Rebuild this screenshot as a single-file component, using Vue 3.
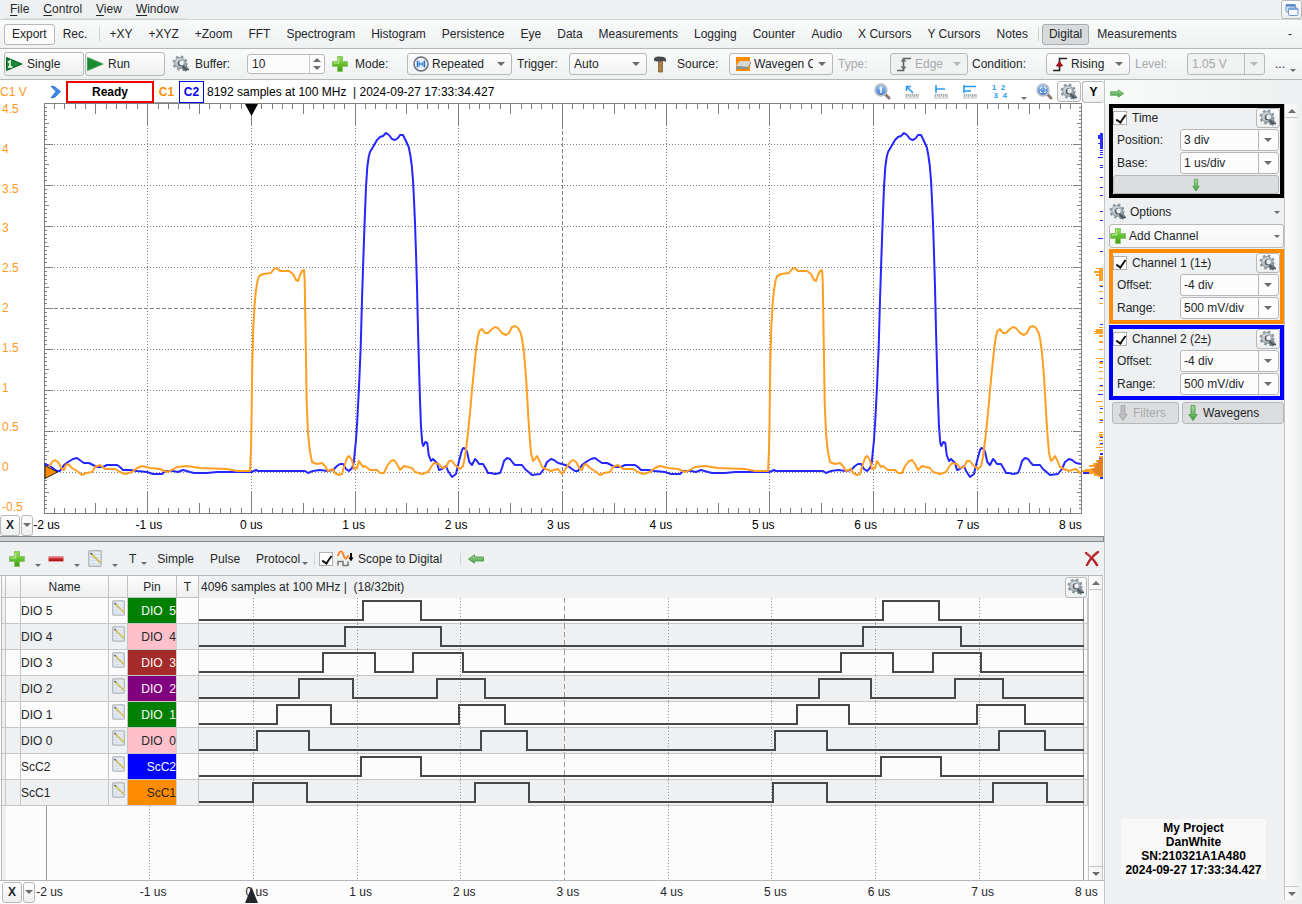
<script setup>
import { ref } from 'vue'

const views = ['+XY', '+XYZ', '+Zoom', 'FFT', 'Spectrogram', 'Histogram', 'Persistence', 'Eye', 'Data', 'Measurements', 'Logging', 'Counter', 'Audio', 'X Cursors', 'Y Cursors', 'Notes']
const volts = ['4.5', '4', '3.5', '3', '2.5', '2', '1.5', '1', '0.5', '0', '-0.5']
const times = ['-2 us', '-1 us', '0 us', '1 us', '2 us', '3 us', '4 us', '5 us', '6 us', '7 us', '8 us']

// Plot area: 10 x 10 divisions
const X0 = 44, Y0 = 103, DX = 103.7, DY = 41
const half = v => Math.floor(v) + 0.5
const vLines = Array.from({ length: 9 }, (_, i) => ({ x: half(X0 + DX * (i + 1)), mid: i === 4 }))
const hLines = Array.from({ length: 9 }, (_, i) => ({ y: half(Y0 + DY * (i + 1)), mid: i === 4 }))
let tickPath = ''
for (let i = 1; i < 100; i++) {
  const x = half(X0 + (DX * i) / 10)
  const y = half(Y0 + (DY * i) / 10)
  const lx = i % 10 === 0 ? 21 : i % 5 === 0 ? 10 : 5
  const ly = i % 10 === 0 ? 9 : i % 5 === 0 ? 5 : 3
  tickPath += `M${x} 104v${lx}M${x} 513v${-lx}M44 ${y}h${ly}M1082 ${y}h${-ly}`
}

// One 5 us period of each analog channel
const blue = [44,464,50,466,54,469,57,471,60,471,64,465,68,462,73,459,77,458,81,461,84,463,89,463,93,465,97,467,103,467,107,465,117,465,120,467,123,470,130,470,137,471,147,472,153,474,162,474,165,471,173,471,178,472,183,470,190,472,194,473,207,473,217,472,230,472,251,472,254,471,256,470,258,471,280,471,305,471,308,473,313,471,320,470,328,471,333,470,337,466,340,464,343,464,346,469,349,471,352,468,353.7,463,354.7,453,356,440,357.3,420,359,387,360.7,347,362,300,363.3,260,364.7,220,366,187,367.3,167,368.7,157,370,152,373,147,377,140,380,137,383,136,386,133,389,135,392,139,395,140,398,138,400,135,403,135,405,139,408.7,147,410.3,155,411.7,165,413,180,414,200,415,223,416,253,417,287,418,330,419,367,420,400,421,427,422.3,443,423.3,446,425.3,442,427.3,443,428.7,455,431,461,433,459,437,463,439,470,442,469,446,466,448,471,452,477,456,474,457.3,468,459.3,460,462,450,463.3,448,466,449,467.3,453,469.3,462,472,465,475,459,477,461,479,464,483,464,486,469,488,473,491,473,495,474,500,473,502,468,504,461,507,458,510,459,513,463,515,465,522,465,525,469,532,475,540,474,544,469,547,462,551,459,554,460,558,463]
const orange = [44,474,49,467,52,462,55,460,58,462,62,469,64,470,66,465,68,464,72,468,77,471,82,475,86,473,92,472,95,467,100,465,105,469,115,469,120,472,125,474,132,472,137,468,142,466,150,468,160,469,167,472,172,470,177,467,187,466,200,468,227,469,237,471,250,471,251,450,251.5,423,252.3,363,253.3,327,254.7,303,256,290,257.7,280,259.3,276,263,274,271,273,274,269,277,268,280,271,289,271,293,274,296,280,298,281,300,275,302,271,304,270,304.7,280,305.7,340,306.7,403,308,433,309.7,450,312,462,317,464,322,463,325,466,328,471,333,469,335,473,339,475,342,474,344,467,347,458,349,456,352,460,354,469,357,468,359,461,363,467,365,466,370,470,377,470,380,473,384,473,387,466,391,461,394,460,397,464,400,470,404,466,412,468,415,472,422,474,428,472,431,467,434,463,439,464,442,468,446,467,449,461,452,461,455,465,460,469,463,466,465,457,466.3,447,468.3,430,470,413,472,390,474,370,476,350,477.7,338,479.3,331,482,329,485,333,488,333,492,329,495,327,498,328,502,333,506,335,509,333,512,327,515,326,518,328,520.7,333,522.3,340,524,353,525.7,373,527,393,528.3,417,529.7,437,531,453,533,461,535,459,537,456,540,462,542,467,546,469,551,471,554,470,558,469]
const trace = (p) => {
  const pts = []
  for (const shift of [0, 518]) {
    for (let i = 0; i < p.length; i += 2) pts.push(`${p[i] + shift},${p[i + 1]}`)
  }
  pts.push(`1081,${p[1]}`)
  return pts.join(' ')
}

// Level histogram bars: y, height, length
const blueBars = [[133,16,3],[135,4,5],[143,1,5],[150,1,3],[152,1,3],[154,1,3],[157,1,5],[165,1,3],[167,1,3],[177,1,3],[187,1,3],[195,1,3],[211,1,3],[220,1,3],[238,1,5],[251,1,3],[286,1,3],[298,1,3],[324,1,3],[361,1,3],[385,1,3],[394,1,5],[408,1,3],[420,1,3],[437,1,3],[443,1,3],[453,2,3],[456,3,4],[472,2,20],[477,2,3]]
const orangeBars = [[268,13,4],[268,1,7],[271,2,9],[274,2,7],[285,1,4],[291,1,4],[303,1,4],[327,1,4],[329,5,7],[331,1,9],[333,1,9],[335,2,4],[341,2,4],[349,1,4],[358,1,7],[362,2,4],[367,1,4],[371,1,4],[378,1,4],[386,1,4],[390,1,4],[401,1,7],[406,1,4],[412,1,4],[419,1,4],[422,1,4],[432,1,4],[434,3,4],[440,1,4],[444,1,4],[447,1,7],[450,1,4],[456,2,4],[460,2,7],[463,2,10],[465,2,14],[468,1,12],[469,1,18],[470,2,21],[472,2,14],[474,2,9],[476,1,5]]

const signals = [
  { name: 'DIO 5', pin: 'DIO  5', tone: 'green', edges: [363, 421, 883, 939] },
  { name: 'DIO 4', pin: 'DIO  4', tone: 'pink', edges: [345, 441, 863, 961] },
  { name: 'DIO 3', pin: 'DIO  3', tone: 'brown', edges: [323, 375, 413, 463, 841, 893, 933, 981] },
  { name: 'DIO 2', pin: 'DIO  2', tone: 'purple', edges: [299, 353, 437, 485, 819, 871, 955, 1003] },
  { name: 'DIO 1', pin: 'DIO  1', tone: 'green', edges: [277, 331, 459, 505, 797, 849, 977, 1025] },
  { name: 'DIO 0', pin: 'DIO  0', tone: 'pink', edges: [257, 309, 481, 527, 775, 827, 999, 1045] },
  { name: 'ScC2', pin: 'ScC2', tone: 'blue', edges: [361, 421, 881, 941] },
  { name: 'ScC1', pin: 'ScC1', tone: 'orange', edges: [253, 307, 475, 529, 773, 827, 993, 1047] }
]
const wave = (edges) => edges.reduce((d, x, i) => d + `H${x}V${i % 2 ? 22 : 3}`, 'M199 22') + 'H1084'
const digitalLines = [149.5, 253.5, 357.5, 460.5, 668.5, 771.5, 875.5, 979.5]

const channels = [
  { id: 'ch1', title: 'Channel 1 (1±)', tone: 'edge-orange' },
  { id: 'ch2', title: 'Channel 2 (2±)', tone: 'edge-blue' }
]
const timeOn = ref(true)
const scopeToDigital = ref(true)
</script>

<template>
  <div class="app">
    <svg class="defs" aria-hidden="true">
      <defs>
        <linearGradient id="gGreen" x1="0" y1="0" x2="0" y2="1"><stop offset="0" stop-color="#8fe04e" /><stop offset="1" stop-color="#3f9e12" /></linearGradient>
        <linearGradient id="gArrow" x1="0" y1="0" x2="0" y2="1"><stop offset="0" stop-color="#a5e09a" /><stop offset="1" stop-color="#3f9a3c" /></linearGradient>
        <linearGradient id="gRed" x1="0" y1="0" x2="0" y2="1"><stop offset="0" stop-color="#f0a0a4" /><stop offset=".5" stop-color="#cc1e28" /><stop offset="1" stop-color="#9c1018" /></linearGradient>
        <linearGradient id="gSteel" x1="0" y1="0" x2="1" y2="1"><stop offset="0" stop-color="#e3e7ea" /><stop offset="1" stop-color="#8d989f" /></linearGradient>
        <linearGradient id="gLens" x1="0" y1="0" x2="0" y2="1"><stop offset="0" stop-color="#a8c8f4" /><stop offset="1" stop-color="#3b78d0" /></linearGradient>
      </defs>
      <symbol id="gear" viewBox="0 0 18 18">
        <circle cx="8" cy="8" r="6.4" fill="none" stroke="#8b979e" stroke-width="2.2" stroke-dasharray="2.6 2.43" />
        <circle cx="8" cy="8" r="5.4" fill="url(#gSteel)" stroke="#87939a" stroke-width=".9" />
        <circle cx="8.800" cy="8.200" r="3" fill="#4d5a62" />
        <circle cx="9.600" cy="8" r="2.400" fill="#eef0f1" />
        <circle cx="13" cy="13.300" r="2.600" fill="#6f7b82" stroke="#7d8990" stroke-width="1.400" stroke-dasharray="1.500 1" />
        <path d="M10.500 11l3 3.400h3.500" stroke="#47535a" stroke-width="1.500" fill="none" />
      </symbol>
      <symbol id="plus" viewBox="0 0 16 16"><path d="M5.500 .5h5v5h5v5h-5v5h-5v-5h-5v-5h5z" fill="url(#gGreen)" stroke="#8cc470" stroke-linejoin="round" /><path d="M6.800 2v5H2" stroke="#c3f29a" fill="none" /></symbol>
      <symbol id="minus" viewBox="0 0 16 16"><rect x=".5" y="5.500" width="15" height="5" rx="1" fill="url(#gRed)" stroke="#d79598" /></symbol>
      <symbol id="note" viewBox="0 0 14 17"><rect x=".8" y=".8" width="12.400" height="15.400" rx="1" fill="#e9eef5" stroke="#b3b5b8" stroke-width="1.400" /><path d="M2 4.500h10M2 7.500h10M2 10.500h10M2 13.500h10M5 2v13" stroke="#ccd8ea" stroke-width=".8" /><path d="M3.500 4l9 9" stroke="#d4bd58" stroke-width="1.800" /><path d="M2.500 3l1.500 1.500" stroke="#555" stroke-width="1.400" /></symbol>
      <symbol id="caret" viewBox="0 0 8 4"><path d="M0 0h8L4 4z" fill="currentColor" /></symbol>
      <symbol id="arrow" viewBox="0 0 16 10"><path d="M.5 3h9V.8L15.500 5 9.500 9.200V7h-9z" fill="url(#gArrow)" stroke="#4f9a4c" stroke-width=".9" stroke-linejoin="round" /></symbol>
      <symbol id="down" viewBox="0 0 10 16"><path d="M3 .5v9H.8L5 15.500 9.200 9.500H7v-9z" fill="url(#gArrow)" stroke="#4f9a4c" stroke-width=".9" stroke-linejoin="round" /></symbol>
      <symbol id="downOff" viewBox="0 0 10 16"><path d="M3 .5v9H.8L5 15.500 9.200 9.500H7v-9z" fill="#bfc0c1" stroke="#a5a6a7" stroke-width=".9" stroke-linejoin="round" /></symbol>
      <symbol id="lens" viewBox="0 0 17 17"><path d="M10.500 10.500l4.500 4.500" stroke="#8a7a72" stroke-width="3" stroke-linecap="round" /><circle cx="7" cy="7" r="5.800" fill="url(#gLens)" stroke="#b9bec4" stroke-width="1.800" /></symbol>
      <symbol id="ruler" viewBox="0 0 14 5"><rect width="14" height="5" fill="#dddfe0" /><path d="M1.500 0v3M3.500 0v2M5.500 0v3M7.500 0v2M9.500 0v3M11.500 0v2M13 0v3" stroke="#a0a3a6" stroke-width=".8" /></symbol>
    </svg>

    <nav class="menubar">
      <button class="menu"><u>F</u>ile</button>
      <button class="menu"><u>C</u>ontrol</button>
      <button class="menu"><u>V</u>iew</button>
      <button class="menu"><u>W</u>indow</button>
      <button class="btn restore" aria-label="Restore window">
        <svg width="14" height="14" viewBox="0 0 14 14"><rect x="1" y="1.500" width="9.500" height="7.500" rx="1" fill="#dbe6f6" stroke="#6f97ce" /><path d="M1 2.500h9.500" stroke="#5685c6" stroke-width="2" /><rect x="3.500" y="5" width="9.500" height="7.500" rx="1" fill="#f4f8fe" stroke="#6f97ce" /><path d="M3.500 6h9.500" stroke="#7fa6dc" stroke-width="2" /></svg>
      </button>
    </nav>

    <div class="bar views">
      <button class="flat raised">Export</button>
      <button class="flat">Rec.</button>
      <i class="sep rec-sep"></i>
      <button v-for="v in views" :key="v" class="flat">{{ v }}</button>
      <i class="sep"></i>
      <button class="flat pressed">Digital</button>
      <button class="flat">Measurements</button>
      <span class="overflow">-</span>
    </div>

    <div class="bar acquire">
      <button class="btn run"><svg width="17" height="16" viewBox="0 0 17 16"><path d="M.5 1.500L16 8 .5 14.500z" fill="#1b8a35" stroke="#11571d" /><path d="M2 6.500l2-1.500V11M2 11h4.500" stroke="#fff" stroke-width="1.500" fill="none" /></svg>Single</button>
      <button class="btn run"><svg width="17" height="16" viewBox="0 0 17 16"><path d="M.5 1.500L16 8 .5 14.500z" fill="#1b8a35" stroke="#3f9a50" /></svg>Run</button>
      <button class="icon gear-tool" aria-label="Acquisition options"><svg width="18" height="18"><use href="#gear" /></svg></button>
      <label class="lab" for="buffer">Buffer:</label>
      <span class="spin"><input id="buffer" type="text" value="10"><span class="steps"><svg class="up" width="8" height="4"><use href="#caret" /></svg><svg width="8" height="4"><use href="#caret" /></svg></span></span>
      <button class="icon plus-tool" aria-label="Add buffer"><svg width="16" height="16"><use href="#plus" /></svg></button>
      <label class="lab" for="mode">Mode:</label>
      <span class="combo w105"><svg class="ic" width="16" height="16" viewBox="0 0 16 16"><circle cx="8" cy="8" r="7" fill="#eef3fa" stroke="#69717c" stroke-width="1.500" /><path d="M4.500 4.500v7M11.500 4.500v7" stroke="#2f74c8" stroke-width="1.500" /><path d="M5.500 5l3 3-3 3zM10.500 5L7.500 8l3 3z" fill="#4d8cd8" /></svg><select id="mode" class="with-icon"><option>Repeated</option></select><svg class="car" width="8" height="4"><use href="#caret" /></svg></span>
      <label class="lab pad" for="trigger">Trigger:</label>
      <span class="combo w78"><select id="trigger"><option>Auto</option></select><svg class="car" width="8" height="4"><use href="#caret" /></svg></span>
      <button class="icon hammer-tool" aria-label="Trigger settings"><svg width="14" height="18" viewBox="0 0 14 18"><path d="M5.500 6h4v11h-4z" fill="#a98147" stroke="#7c5a2c" stroke-width=".8" /><path d="M1 3.500Q3 1 6 1.500l5 .5 2 2v3l-2-1-8 .5-2-1z" fill="#454a4e" /></svg></button>
      <label class="lab" for="source">Source:</label>
      <span class="combo w104"><svg class="ic" width="16" height="16" viewBox="0 0 16 16"><path fill="#ff8c00" d="M1 1h14v14H1z" /><path d="M1 10l4-5h11l-3 6z" fill="#d5d7d9" /><path d="M1 10l12 1v2H1zM13 11l3-6v2l-3 6z" fill="#8e9194" /></svg><select id="source" class="with-icon"><option>Wavegen C1</option></select><svg class="car" width="8" height="4"><use href="#caret" /></svg></span>
      <label class="lab pad off" for="type">Type:</label>
      <span class="combo w78 off"><svg class="ic" width="18" height="16" viewBox="0 0 18 16"><path d="M1 14.500h6.500v-12H15" stroke="#606366" stroke-width="1.600" fill="none" /><path d="M4.500 5.500h6l-3-3.500zM4.500 10.500h6l-3 3.500z" fill="#6a6d70" /></svg><select id="type" class="with-icon" disabled><option>Edge</option></select><svg class="car" width="8" height="4"><use href="#caret" /></svg></span>
      <label class="lab pad wide" for="condition">Condition:</label>
      <span class="combo w84"><svg class="ic" width="18" height="16" viewBox="0 0 18 16"><path d="M1 14.500h6.500v-12H15" stroke="#222" stroke-width="1.600" fill="none" /><path d="M4.500 10h6l-3-4.500z" fill="#c00d1e" stroke="#8a0812" /></svg><select id="condition" class="with-icon"><option>Rising</option></select><svg class="car" width="8" height="4"><use href="#caret" /></svg></span>
      <label class="lab pad off" for="level">Level:</label>
      <span class="combo split w78 off"><select id="level" disabled><option>1.05 V</option></select><svg class="car" width="8" height="4"><use href="#caret" /></svg></span>
      <span class="more">...<svg width="6" height="3"><use href="#caret" /></svg></span>
    </div>

    <main class="body">
      <section class="left">
        <header class="status">
          <span class="unit">C1 V</span>
          <svg class="chev" width="11" height="14" viewBox="0 0 11 14"><path d="M1 1l5 5.500L1 13l4-1 5.500-5.500L5 2z" fill="#3d8bf2" stroke="#2a72d8" /></svg>
          <span class="ready">Ready</span>
          <span class="chip c1">C1</span>
          <span class="chip c2">C2</span>
          <span class="info">8192 samples at 100 MHz&nbsp; | 2024-09-27 17:33:34.427</span>
          <div class="tools">
            <button class="icon" aria-label="Zoom 1:1"><svg width="17" height="17" viewBox="0 0 17 17"><use href="#lens" /><path d="M5.500 5.500l1.500-1V10" stroke="#fff" stroke-width="1.500" fill="none" /></svg></button>
            <button class="icon" aria-label="Cursor"><svg width="15" height="14" viewBox="0 0 15 14"><path d="M2.500 6V1.500H7M3 2l6 6" stroke="#2b9cf4" stroke-width="1.600" fill="none" /><use href="#ruler" x="1" y="9" width="14" height="5" /></svg></button>
            <button class="icon" aria-label="Horizontal cursors"><svg width="15" height="14" viewBox="0 0 15 14"><path d="M3 0v8M3 4h9" stroke="#2b9cf4" stroke-width="1.600" fill="none" /><use href="#ruler" x="1" y="9" width="14" height="5" /></svg></button>
            <button class="icon" aria-label="Vertical cursors"><svg width="15" height="14" viewBox="0 0 15 14"><path d="M2 0v8M2 1.500h12M2 6h7" stroke="#2b9cf4" stroke-width="1.600" fill="none" /><use href="#ruler" x="1" y="9" width="14" height="5" /></svg></button>
            <button class="icon nums"><span>1</span><span>2</span><span class="in">3</span><span class="in">4</span></button>
            <svg class="drop" width="6" height="3"><use href="#caret" /></svg>
            <button class="icon fit" aria-label="Zoom fit"><svg width="17" height="17" viewBox="0 0 17 17"><use href="#lens" /><path d="M4.500 6V4.500H6M8 4.500h1.500V6M9.500 8v1.500H8M6 9.500H4.500V8" stroke="#e8f2ff" fill="none" /></svg></button>
            <button class="btn tool-gear" aria-label="Plot options"><svg width="18" height="18"><use href="#gear" /></svg></button>
            <button class="btn ybtn">Y</button>
          </div>
        </header>

        <div class="scope">
          <div class="volts"><span v-for="v in volts" :key="v">{{ v }}</span></div>
          <svg class="plot" viewBox="44 103 1038 411" preserveAspectRatio="none" role="img" aria-label="Oscilloscope traces">
            <g stroke="#808080" fill="none">
              <path v-for="l in vLines" :key="l.x" :d="`M${l.x} 125V492`" :stroke-dasharray="l.mid ? '4 2' : '1 2'" />
              <path v-for="l in hLines" :key="l.y" :d="`M54 ${l.y}H1073`" :stroke-dasharray="l.mid ? '4 2' : '1 2'" />
              <path :d="tickPath" />
              <rect x="44.500" y="103.500" width="1037" height="410" />
            </g>
            <path d="M245 104h13l-6.500 12z" fill="#000" />
            <polyline :points="trace(blue)" class="trace blue" />
            <polyline :points="trace(orange)" class="trace orange" />
            <path d="M45 465.500L57.500 472 45 478.500z" fill="#ff8c00" stroke="#222" />
          </svg>
          <svg class="levels" viewBox="1082 103 22 411" preserveAspectRatio="none" aria-hidden="true">
            <rect v-for="(b, i) in blueBars" :key="'b' + i" :x="1103 - b[2]" :y="b[0]" :height="b[1]" :width="b[2]" fill="#2a2aff" />
            <rect v-for="(b, i) in orangeBars" :key="'o' + i" :x="1103 - b[2]" :y="b[0]" :height="b[1]" :width="b[2]" fill="#ffa126" />
            <path d="M1103 456l-5 5-2 5-4 4 4 4 7 3z" fill="#e08128" />
          </svg>
        </div>
        <div class="axis scope-axis">
          <button class="btn x">X</button><button class="btn xd" aria-label="X axis options"><svg width="8" height="4"><use href="#caret" /></svg></button>
          <div class="times"><span v-for="t in times" :key="t">{{ t }}</span></div>
        </div>

        <div class="splitter"></div>

        <div class="dtools">
          <button class="icon" aria-label="Add"><svg width="16" height="16"><use href="#plus" /></svg></button><svg class="drop" width="6" height="3"><use href="#caret" /></svg>
          <button class="icon" aria-label="Remove"><svg width="16" height="16"><use href="#minus" /></svg></button><svg class="drop" width="6" height="3"><use href="#caret" /></svg>
          <button class="icon notebtn" aria-label="Edit"><svg width="14" height="17"><use href="#note" /></svg></button><svg class="drop after-note" width="6" height="3"><use href="#caret" /></svg>
          <button class="flat t">T</button><svg class="drop near" width="6" height="3"><use href="#caret" /></svg>
          <button class="flat simple">Simple</button>
          <button class="flat">Pulse</button>
          <button class="flat proto">Protocol</button><svg class="drop near" width="6" height="3"><use href="#caret" /></svg>
          <i class="sep"></i>
          <label class="check"><input v-model="scopeToDigital" type="checkbox"><svg width="17" height="17" viewBox="0 0 17 17"><path d="M1 6c1.500-6 4-6 5.500-1s3 5 5 0" stroke="#ff8020" stroke-width="1.800" fill="none" /><path d="M1 15.500v-4h5v4h5v-4" stroke="#777" stroke-width="1.500" fill="none" /><path d="M14 3v5" stroke="#000" stroke-width="2" /><path d="M11.500 7.500h5l-2.500 4z" /></svg>Scope to Digital</label>
          <i class="sep second"></i>
          <button class="icon back" aria-label="Dock left"><svg width="16" height="10" viewBox="0 0 16 10"><use href="#arrow" transform="translate(16 0) scale(-1 1)" width="16" height="10" /></svg></button>
          <button class="icon close" aria-label="Close"><svg width="16" height="17" viewBox="0 0 16 17"><path d="M2 3q6 4 11 12M14 2Q7 7 3 15" stroke="#b3262b" stroke-width="2.400" fill="none" stroke-linecap="round" /><path d="M3 3q3 2 5 4" stroke="#ee8a88" fill="none" /></svg></button>
        </div>

        <div class="logic">
          <div class="logic-main">
            <table>
              <colgroup><col class="k0"><col class="k1"><col class="k2"><col class="k3"><col class="k4"><col class="k5"><col></colgroup>
              <thead>
                <tr><th></th><th></th><th>Name</th><th></th><th>Pin</th><th>T</th>
                  <th class="wave-head"><div>4096 samples at 100 MHz |&nbsp; (18/32bit)<button class="btn dgear" aria-label="Digital options"><svg width="18" height="18"><use href="#gear" /></svg></button></div></th></tr>
              </thead>
              <tbody>
                <tr v-for="s in signals" :key="s.name">
                  <td class="grip"></td><td></td><td>{{ s.name }}</td>
                  <td class="note"><button class="icon" :aria-label="'Edit ' + s.name"><svg width="13" height="16"><use href="#note" /></svg></button></td>
                  <td class="pin" :class="s.tone">{{ s.pin }}</td><td></td>
                  <td class="wave">
                    <svg viewBox="199 0 888 25" preserveAspectRatio="none" aria-hidden="true">
                      <g stroke="#9a9a9a"><path v-for="x in digitalLines.slice(1)" :key="x" :d="`M${x} 0V25`" stroke-dasharray="1 2" /><path d="M564.500 0V25" stroke-dasharray="5 3" /><path d="M1083.500 0V25" /></g>
                      <path :d="wave(s.edges)" fill="none" stroke="#464849" stroke-width="2" />
                    </svg>
                  </td>
                </tr>
              </tbody>
            </table>
            <svg class="rest" viewBox="2 0 1086 74" preserveAspectRatio="none" aria-hidden="true">
              <path d="M2 0h4v74H2z" fill="#eff0f1" />
              <g stroke="#9a9a9a"><path v-for="x in digitalLines" :key="x" :d="`M${x} 0V74`" stroke-dasharray="1 2" /><path d="M564.500 0V74" stroke-dasharray="5 3" /><path d="M46.500 0V74M1083.500 0V74" /></g>
            </svg>
          </div>
          <div class="scroll"><button class="sb" aria-label="Scroll up"><svg class="up" width="8" height="4"><use href="#caret" /></svg></button><i></i><button class="sb bottom" aria-label="Scroll down"><svg width="8" height="4"><use href="#caret" /></svg></button></div>
        </div>
        <div class="axis digital-axis">
          <button class="btn x">X</button><button class="btn xd" aria-label="X axis options"><svg width="8" height="4"><use href="#caret" /></svg></button>
          <div class="times"><span v-for="t in times" :key="t">{{ t }}</span><svg class="zero" width="13" height="16" viewBox="0 0 13 16"><path d="M0 16L6.500 0 13 16z" fill="#232629" /></svg></div>
        </div>
      </section>

      <aside class="side">
        <div class="side-top"><button class="icon" aria-label="Collapse panel"><svg width="14" height="9" viewBox="0 0 16 10"><use href="#arrow" width="16" height="10" /></svg></button></div>
        <div class="side-row">
          <div class="panel">
            <fieldset class="group edge-black">
              <div class="ghead"><label class="check"><input v-model="timeOn" type="checkbox">Time</label><button class="btn ggear" aria-label="Time options"><svg width="18" height="18"><use href="#gear" /></svg></button></div>
              <div class="grow"><label for="position">Position:</label><span class="combo split"><select id="position"><option>3 div</option></select><svg class="car" width="8" height="4"><use href="#caret" /></svg></span></div>
              <div class="grow"><label for="base">Base:</label><span class="combo split"><select id="base"><option>1 us/div</option></select><svg class="car" width="8" height="4"><use href="#caret" /></svg></span></div>
              <button class="btn gray expand" aria-label="Expand"><svg width="8" height="14" viewBox="0 0 10 16"><use href="#down" /></svg></button>
            </fieldset>
            <button class="opt"><svg width="18" height="18"><use href="#gear" /></svg>Options<svg class="end" width="6" height="3"><use href="#caret" /></svg></button>
            <button class="opt add"><svg width="16" height="16"><use href="#plus" /></svg>Add Channel<svg class="end" width="6" height="3"><use href="#caret" /></svg></button>
            <fieldset v-for="c in channels" :key="c.id" class="group" :class="c.tone">
              <div class="ghead"><label class="check"><input type="checkbox" checked>{{ c.title }}</label><button class="btn ggear" :aria-label="c.title + ' options'"><svg width="18" height="18"><use href="#gear" /></svg></button></div>
              <div class="grow"><label :for="c.id + 'o'">Offset:</label><span class="combo split"><select :id="c.id + 'o'"><option>-4 div</option></select><svg class="car" width="8" height="4"><use href="#caret" /></svg></span></div>
              <div class="grow"><label :for="c.id + 'r'">Range:</label><span class="combo split"><select :id="c.id + 'r'"><option>500 mV/div</option></select><svg class="car" width="8" height="4"><use href="#caret" /></svg></span></div>
            </fieldset>
            <div class="pair"><button class="btn gray filters" disabled><svg width="10" height="16"><use href="#downOff" /></svg>Filters</button><button class="btn gray wavegens"><svg width="10" height="16"><use href="#down" /></svg>Wavegens</button></div>
            <div class="stamp">My Project<br>DanWhite<br>SN:210321A1A480<br>2024-09-27 17:33:34.427</div>
          </div>
          <div class="scroll tall"><button class="sb" aria-label="Scroll up"><svg class="up" width="8" height="4"><use href="#caret" /></svg></button><i></i><button class="sb bottom" aria-label="Scroll down"><svg width="8" height="4"><use href="#caret" /></svg></button></div>
        </div>
      </aside>
    </main>
  </div>
</template>

<style>
body { margin: 0; background: #eff0f1; }
</style>

<style scoped>
.app { min-height: 100vh; display: flex; flex-direction: column; background: #eff0f1; color: #232629; font: 12px/16px "Liberation Sans", Arial, sans-serif; }
.app * { box-sizing: border-box; }
.defs { position: absolute; width: 0; height: 0; }
svg { flex: none; color: #6a6d70; }
button, input, select { font: inherit; color: inherit; margin: 0; }
button { padding: 0; border: 0; background: none; white-space: nowrap; }
.up { transform: rotate(180deg); }
.icon { display: flex; align-items: center; justify-content: center; }
.btn { display: flex; align-items: center; justify-content: center; border: 1px solid #b6b8ba; border-radius: 3px; background: linear-gradient(#fdfdfd, #eeefef); }
.gray { background: #dcddde; }

.menubar { height: 20px; display: flex; align-items: center; border-bottom: 1px solid #d3d4d6; padding-left: 3px; }
.menu { height: 18px; padding: 0 7px; line-height: 16px; border-bottom: 1px solid #dcddde; }
.menu u { text-underline-offset: 2px; }
.restore { width: 21px; height: 19px; margin-left: auto; }

.bar { display: flex; align-items: center; border-bottom: 1px solid #b5b7b9; background: linear-gradient(#f9fafa, #eff0f1); white-space: nowrap; }
.views { height: 29px; padding: 0 10px 0 4px; }
.flat { height: 21px; padding: 0 7px; border: 1px solid transparent; border-radius: 3px; }
.raised { border-color: #b6b8ba; background: #fcfcfc; }
.pressed { border-color: #a9abad; background: #d9dadb; padding: 0 6px; }
.sep { width: 1px; height: 14px; background: #d0d2d4; margin: 0 3px 0 2px; }
.rec-sep { margin: 0 1px 0 4px; }
.overflow { margin-left: auto; }

.acquire { height: 31px; padding: 0 6px 0 4px; }
.run { width: 80px; height: 24px; justify-content: flex-start; padding-left: 1px; gap: 4px; margin-right: 1px; }
.gear-tool { width: 29px; }
.plus-tool { width: 30px; }
.hammer-tool { width: 30px; padding-right: 4px; }
.lab { width: 52px; }
.pad { width: 57px; padding-left: 5px; }
.wide { width: 78px; padding-left: 4px; }
.off { color: #a7a9ab; }
.off svg.car { color: #b5b7b9; }
.spin { width: 78px; height: 20px; display: flex; border: 1px solid #b6b8ba; border-radius: 3px; background: #fcfcfc; }
.spin input { flex: 1; min-width: 0; border: 0; padding: 0 4px; background: none; outline: 0; }
.steps { width: 15px; border-left: 1px solid #c5c7c9; display: flex; flex-direction: column; justify-content: space-evenly; align-items: center; }
.combo { position: relative; display: block; height: 22px; border: 1px solid #b6b8ba; border-radius: 3px; background: linear-gradient(#fdfdfd, #f1f2f2); }
.combo select { appearance: none; display: block; width: 100%; height: 20px; border: 0; background: none; outline: 0; padding: 0 19px 0 4px; opacity: 1; }
.combo select.with-icon { padding-left: 24px; }
.combo .ic { position: absolute; left: 5px; top: 2px; }
.combo .car { position: absolute; right: 6px; top: 8px; }
.combo.off { background: #f0f1f1; }
.combo.split { background: #fcfcfc; }
.combo.split.off { background: #f0f1f1; }
.combo.split::after { content: ""; position: absolute; right: 19px; top: 0; bottom: 0; border-left: 1px solid #b6b8ba; }
.w105 { width: 105px; }
.w104 { width: 104px; }
.w78 { width: 78px; }
.w84 { width: 84px; }
.more { margin-left: auto; display: flex; align-items: flex-end; gap: 5px; }

.body { flex: 1; display: grid; grid-template-columns: minmax(0, 1fr) 197px; }
.left { display: flex; flex-direction: column; min-width: 0; border-right: 1px solid #c3c5c7; background: #fff; color: #232629; }
.status { height: 23px; display: flex; align-items: center; color: #000; white-space: nowrap; }
.unit { width: 50px; color: #ff9a1e; }
.chev { margin-right: 5px; }
.ready { width: 88px; height: 22px; border: 2px solid #f00000; text-align: center; font-weight: bold; line-height: 18px; }
.chip { font-weight: bold; width: 25px; height: 22px; line-height: 20px; text-align: center; border: 1px solid transparent; }
.c1 { color: #ff8c00; border-bottom-color: #999; }
.c2 { color: #0000f0; border-color: #0000f0; margin-right: 3px; }
.tools { margin-left: auto; display: flex; align-items: center; }
.tools .icon { width: 29px; }
.nums { display: grid; grid-template-columns: 7px 7px; justify-content: center; font: bold 8px/8px "Liberation Sans", Arial, sans-serif; color: #2b9cf4; column-gap: 2px; }
.nums .in { padding-left: 3px; }
.tools .drop { margin: 14px 4px 0 8px; }
.tools .fit { width: 26px; }
.tool-gear { width: 24px; height: 21px; }
.ybtn { width: 22px; height: 22px; font-weight: bold; margin-left: 1px; border-right: 0; }

.scope { display: grid; grid-template-columns: 44px minmax(0, 1fr) 22px; height: 411px; }
.volts { display: flex; flex-direction: column; justify-content: space-between; padding: 0 0 1px 2px; line-height: 12px; color: #ff9a1e; }
.plot, .levels { width: 100%; height: 411px; display: block; }
.trace { fill: none; stroke-width: 2; stroke-linejoin: round; }
.blue { stroke: #2626ff; }
.orange { stroke: #ff9f22; }

.axis { height: 22px; display: flex; align-items: center; background: #fff; }
.x { width: 20px; height: 21px; font-weight: bold; }
.xd { width: 12px; height: 21px; margin-left: 1px; }
.times { position: relative; flex: 1; display: flex; justify-content: space-between; white-space: nowrap; }
.times span { width: 27px; text-align: center; }
.scope-axis .times { padding-right: 20px; color: #000; }
.digital-axis { padding: 0 0 1px 2px; background: #fcfcfc; height: 24px; border-top: 1px solid #b5b7b9; }
.digital-axis .times { padding: 0 4px 0 1px; }
.zero { position: absolute; left: 20%; top: 3px; margin-left: -4px; }
.splitter { height: 6px; background: #cfd0d1; border: solid #858789; border-width: 1px 1px 1px 0; }

.dtools { height: 33px; display: flex; align-items: center; padding: 0 4px 0 9px; background: #eff0f1; white-space: nowrap; }
.dtools .drop { margin: 14px 7px 0 10px; }
.dtools .notebtn { margin-left: 1px; }
.dtools .after-note { margin-right: 3px; }
.dtools .near { margin: 9px 0 0; }
.dtools .t { padding-right: 4px; }
.dtools .simple { margin-left: 2px; }
.dtools .proto { padding: 0 1px 0 7px; }
.dtools .sep { margin: 0 4px 0 6px; height: 12px; }
.check { display: flex; align-items: center; gap: 4px; }
.check input { appearance: none; position: relative; width: 14px; height: 14px; border: 1px solid #adafb1; background: #fff; flex: none; }
.check input:checked::after { content: ""; position: absolute; left: 4px; top: 1px; width: 4px; height: 8px; border: solid #111; border-width: 0 2px 2px 0; transform: rotate(35deg); }
.dtools .second { margin: 0 7px 0 18px; }
.close { margin-left: auto; }

.logic { flex: 1; display: flex; border-top: 1px solid #b5b7b9; margin-right: 1px; background: #fcfcfc; }
.logic-main { flex: 1; min-width: 0; display: flex; flex-direction: column; border-left: 1px solid #b5b7b9; margin-left: 1px; }
table { width: 100%; table-layout: fixed; border-collapse: separate; border-spacing: 0; }
.k0 { width: 4px; } .k1 { width: 15px; } .k2 { width: 88px; } .k3 { width: 19px; } .k4 { width: 49px; } .k5 { width: 22px; }
th { height: 22px; padding: 0; font-weight: normal; border: solid #bfc1c3; border-width: 0 1px 1px 0; background: linear-gradient(#fcfcfc, #eeefef); }
.wave-head { text-align: left; background: #eff0f1; border: 0; }
.wave-head div { display: flex; align-items: center; padding-left: 2px; height: 22px; }
.dgear { width: 22px; height: 21px; margin-left: auto; margin-right: 1px; }
td { height: 26px; padding: 0; border: solid #c4c6c8; border-width: 0 1px 1px 0; background: #fcfcfc; white-space: pre; }
tbody tr:nth-child(even) td { background: #eff0f1; }
td.grip { background: #eff0f1; }
.note .icon { margin: 0 0 6px 3px; }
.wave { vertical-align: top; }
.wave svg { display: block; width: 100%; height: 25px; }
td.pin { text-align: right; color: #fcfcfc; border-right: 1px solid #d0d2d4; }
tbody tr td.green { background: #008000; }
tbody tr td.pink { background: #ffc0cb; color: #232629; }
tbody tr td.brown { background: #a52a2a; }
tbody tr td.purple { background: #800080; }
tbody tr td.pin.blue { background: #0000ff; }
tbody tr td.pin.orange { background: #ff8c00; color: #232629; }
.rest { flex: 1 0 74px; width: 100%; display: block; }
.scroll { width: 15px; border: solid #c3c5c7; border-width: 0 1px; display: flex; flex-direction: column; background: linear-gradient(90deg, #fcfcfc, #f1f2f2); }
.scroll i { flex: 1; }
.sb { height: 14px; display: flex; align-items: center; justify-content: center; border-bottom: 1px solid #c3c5c7; }
.sb.bottom { border-bottom: 0; border-top: 1px solid #c3c5c7; }

.side { display: flex; flex-direction: column; min-width: 0; }
.side-top { height: 24px; padding: 9px 0 0 5px; background: linear-gradient(90deg, #f9fafa, #eeeff0); }
.side-row { flex: 1; display: flex; padding: 0 4px; }
.panel { width: 175px; display: flex; flex-direction: column; }
.group { margin: 0 0 1px; padding: 0; border: 4px solid; min-width: 0; }
.edge-black { border-color: #000; margin-bottom: 2px; }
.edge-orange { border-color: #ff8c00; }
.edge-blue { border-color: #0000ff; }
.ghead { height: 20px; margin-bottom: 1px; display: flex; align-items: center; justify-content: space-between; }
.ghead .check { gap: 5px; }
.ggear { width: 24px; height: 20px; }
.grow { height: 23px; display: flex; padding-right: 1px; }
.grow label { width: 67px; padding-left: 4px; line-height: 22px; }
.grow .combo { flex: 1; min-width: 0; }
.grow .combo select { padding: 0 0 0 3px; }
.expand { width: 166px; height: 19px; }
.opt { height: 24px; display: flex; align-items: center; gap: 3px; padding-right: 4px; }
.opt .end { margin-left: auto; }
.add { border: 1px solid #b6b8ba; border-radius: 3px; background: linear-gradient(#fcfcfc, #f3f4f4); margin-bottom: 1px; padding-left: 0; padding-right: 3px; }
.pair { display: flex; gap: 3px; padding-left: 3px; margin-top: 1px; }
.pair .btn { height: 22px; justify-content: flex-start; padding-left: 5px; gap: 5px; }
.filters { width: 67px; color: #a7a9ab; }
.wavegens { flex: 1; }
.stamp { align-self: flex-start; width: 145px; margin: auto 12px 25px; padding: 2px 0; text-align: center; font-weight: bold; line-height: 14px; background: #f8f8f8; color: #000; white-space: nowrap; }
.tall { border-right: 0; width: 14px; margin-bottom: 4px; }
</style>
